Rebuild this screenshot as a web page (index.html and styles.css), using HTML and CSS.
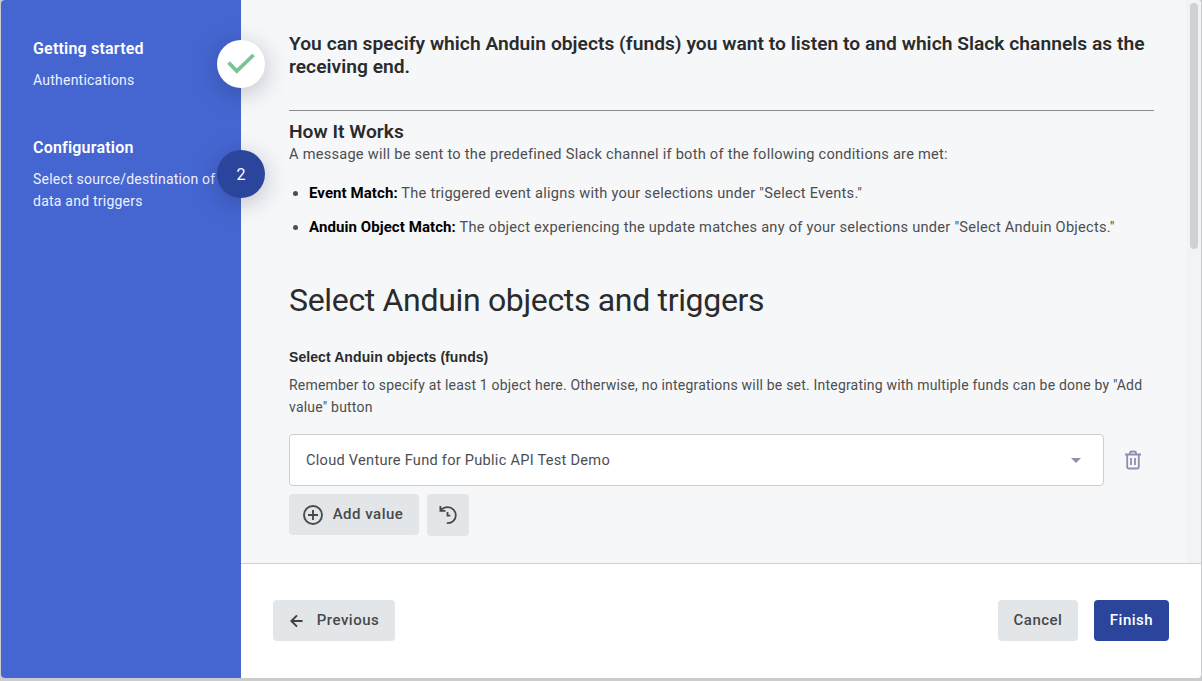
FILE: index.html
```html
<!DOCTYPE html>
<html lang="en">
<head>
<meta charset="utf-8">
<title>Configuration</title>
<link rel="stylesheet" href="styles.css">
</head>
<body>
<div class="dialog">
  <aside class="steps">
    <section class="step step-first">
      <h3 class="step-title">Getting started</h3>
      <p class="step-text">Authentications</p>
      <span class="badge badge-done">
        <svg width="28" height="22" viewBox="0 0 28 22"><path d="M1.500 9.500 9.800 18 26.500 2" fill="none" stroke="#79c497" stroke-width="3.800"/></svg>
      </span>
    </section>
    <section class="step step-second">
      <h3 class="step-title">Configuration</h3>
      <p class="step-text">Select source/destination of<br>data and triggers</p>
      <span class="badge badge-current">2</span>
    </section>
  </aside>
  <main class="main">
    <div class="content">
      <h2 class="lead">You can specify which Anduin objects (funds) you want to listen to and which Slack channels as the<br>receiving end.</h2>
      <hr class="rule">
      <h2 class="how">How It Works</h2>
      <p class="message">A message will be sent to the predefined Slack channel if both of the following conditions are met:</p>
      <ul class="conditions">
        <li><b>Event Match:</b> The triggered event aligns with your selections under "Select Events."</li>
        <li><b>Anduin Object Match:</b> The object experiencing the update matches any of your selections under "Select Anduin Objects."</li>
      </ul>
      <h1 class="title">Select Anduin objects and triggers</h1>
      <h4 class="label">Select Anduin objects (funds)</h4>
      <p class="hint">Remember to specify at least 1 object here. Otherwise, no integrations will be set. Integrating with multiple funds can be done by "Add<br>value" button</p>
      <div class="field">
        <div class="select"><span>Cloud Venture Fund for Public API Test Demo</span><i class="caret"></i></div>
        <svg class="trash" width="18" height="20" viewBox="0 0 18 20" fill="none" stroke="#8e8eae" stroke-width="1.800"><path d="M1 4.500H17M3.200 4.500V17Q3.200 18.500 4.700 18.500H13.300Q14.800 18.500 14.800 17V4.500M6 4.500V3Q6 1.500 7.500 1.500H10.500Q12 1.500 12 3V4.500M7 8V15M11 8V15"/></svg>
      </div>
      <div class="actions">
        <button class="btn btn-add">
          <svg width="20" height="20" viewBox="0 0 20 20" fill="none" stroke="#47494b" stroke-width="1.900"><circle cx="10" cy="10" r="9"/><path d="M10 5V15M5 10H15"/></svg>
          <span class="btn-label">Add value</span>
        </button>
        <button class="btn btn-reset">
          <svg width="20" height="20" viewBox="0 0 20 20" fill="none" stroke="#47494b" stroke-width="1.800"><path d="M2.400 1V5.800H7.500M2.600 5.700C4.500 3.200 7 2.200 9.800 2.200A8 8 0 0 1 9.800 18.200H8.800M9.500 7V10.700H12.300"/></svg>
        </button>
      </div>
      <div class="scrollbar"><div class="thumb"></div></div>
    </div>
    <footer class="footer">
      <button class="btn btn-prev">
        <svg width="13" height="14" viewBox="0 0 13 14" fill="none" stroke="#3f4143" stroke-width="2"><path d="M12.500 7H1.700M7 1.400 1.400 7 7 12.600"/></svg>
        <span class="btn-label">Previous</span>
      </button>
      <button class="btn btn-cancel"><span class="btn-label">Cancel</span></button>
      <button class="btn btn-finish"><span class="btn-label">Finish</span></button>
    </footer>
  </main>
</div>
</body>
</html>
```
FILE: styles.css
```css
* { box-sizing: border-box; }
body {
  margin: 0;
  height: 681px;
  padding: 0 1px 3px;
  overflow: hidden;
  background: #cacbcc;
  font-family: Roboto, "Liberation Sans", sans-serif;
  color: #4c4e50;
}
h1, h2, h3, h4, p, ul { margin: 0; padding: 0; white-space: nowrap; }
.dialog { display: flex; height: 678px; border-radius: 4px; overflow: hidden; background: #fff; }

.steps { width: 240px; padding: 40px 0 0 32px; background: #4566d1; color: #fff; position: relative; z-index: 1; }
.step { position: relative; }
.step-first { height: 110px; }
.step-title { padding-top: 1px; font-size: 16px; line-height: 16px; font-weight: 600; letter-spacing: 0.2px; margin-bottom: 12px; }
.step-second { margin-top: -11px; }
.step-text { font-size: 14px; line-height: 22px; letter-spacing: 0.23px; color: #edf1ff; }
.badge {
  position: absolute; right: -24px; top: 0; width: 48px; height: 48px; border-radius: 50%;
  display: flex; align-items: center; justify-content: center;
  box-shadow: 0 5px 24px rgba(20, 25, 55, 0.25);
}
.badge-done { background: #fff; }
.badge-current { top: 11px; background: #2c459c; font-size: 16px; }

.main { flex: 1; min-width: 0; display: flex; flex-direction: column; }
.content { position: relative; height: 563px; padding: 32px 48px 0; background: #f6f7f9; overflow: hidden; }
.lead, .how { font-size: 19.200px; line-height: 23px; font-weight: 600; letter-spacing: 0.03px; color: #292b2c; }
.rule { width: 865px; height: 1px; margin: 32px 0 9px; border: 0; background: #888d8c; }
.message { font-size: 14.600px; line-height: 22px; letter-spacing: 0.25px; }
.conditions { padding-left: 20px; margin-top: 17px; font-size: 14.600px; }
.conditions li { line-height: 22px; margin-bottom: 12px; letter-spacing: 0.25px; }
.conditions b { color: #000; font-size: 15px; font-weight: 700; letter-spacing: 0.08px; }
.title { margin-top: 43px; font-size: 32px; line-height: 38px; font-weight: 400; letter-spacing: -0.33px; color: #292b2c; }
.label { margin-top: 28px; font: 700 14px/20px "Liberation Sans", Arial, sans-serif; letter-spacing: 0.08px; color: #292b2c; }
.hint { margin-top: 7px; font-size: 14px; line-height: 22px; letter-spacing: 0.2px; }
.field { display: flex; align-items: center; margin-top: 16px; gap: 20px; }
.select {
  display: flex; align-items: center; justify-content: space-between; width: 815px; height: 52px;
  padding: 0 22px 0 16px; border: 1px solid #cdced4; border-radius: 4px; background: #fff;
  font-size: 14.600px; letter-spacing: 0.26px;
}
.caret { border: 5px solid transparent; border-top-color: #8f90a4; border-bottom: 0; }
.actions { display: flex; align-items: flex-start; gap: 8px; margin-top: 8px; }
.btn {
  display: flex; align-items: center; justify-content: center; height: 41px; padding: 0; border: 0;
  border-radius: 4px; background: #e2e6e9; color: #47494b; font: 500 15px/20px Roboto, sans-serif; letter-spacing: 0.5px;
}
.btn-label { padding-bottom: 2px; }
.btn-add { width: 130px; gap: 10px; padding-right: 2px; }
.btn-reset { width: 42px; height: 42px; }
.scrollbar { position: absolute; right: 0; top: 0; width: 15px; height: 563px; padding: 3px 3px 0 4px; background: #f2f3f5; }
.thumb { height: 246px; border-radius: 4px; background: #ced2d5; }
.footer { display: flex; flex: 1; padding: 36px 32px 0; border-top: 1px solid #cccfd5; background: #fff; }
.btn-prev { width: 122px; gap: 14px; padding-left: 1px; margin-right: auto; }
.btn-cancel { width: 80px; margin-right: 16px; }
.btn-finish { width: 75px; background: #2c459c; color: #fff; }
```
